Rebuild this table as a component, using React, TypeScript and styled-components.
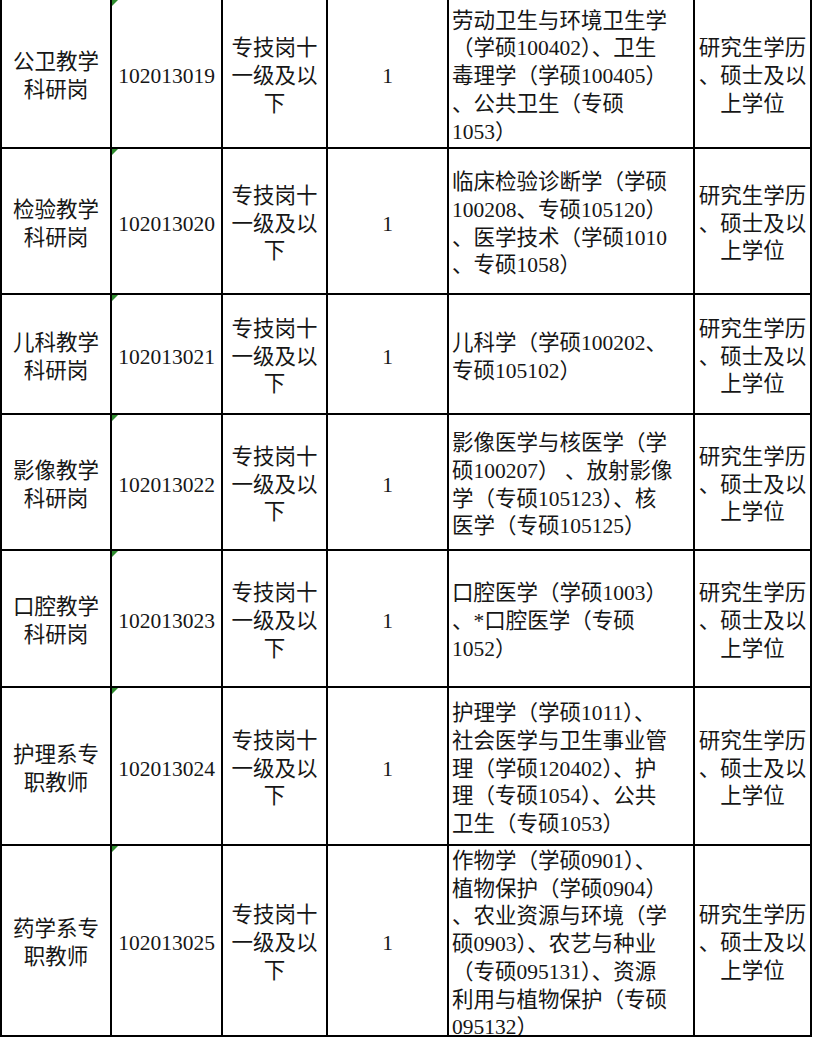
import React from 'react';
import styled, { createGlobalStyle } from 'styled-components';

const GlobalStyle = createGlobalStyle`
  html, body {
    margin: 0;
    padding: 0;
    background: #ffffff;
    overflow: hidden;
  }
`;

const Sheet = styled.div`
  display: grid;
  grid-template-columns: 110px 111px 105px 121px 246px 117px;
  border-left: 2px solid #000;
  width: max-content;
  font-family: "Liberation Serif", "Noto Sans CJK SC", serif;
  font-size: 21.5px;
  line-height: 27.7px;
  color: #161616;
`;

const Cell = styled.div<{ $h: number; $align?: 'left' | 'center'; $top?: boolean }>`
  position: relative;
  height: ${p => p.$h}px;
  box-sizing: border-box;
  border-right: 2px solid #000;
  border-bottom: 2px solid #000;
  display: flex;
  flex-direction: column;
  justify-content: ${p => (p.$top ? 'flex-start' : 'center')};
  align-items: ${p => (p.$align === 'left' ? 'flex-start' : 'center')};
  text-align: ${p => p.$align ?? 'center'};
  padding: ${p => (p.$top ? '2px' : '7px')} ${p => (p.$align === 'left' ? '3px' : '0')} 0;
  overflow: hidden;
`;

// Excel "number stored as text" marker
const CodeCell = styled(Cell)`
  &::before {
    content: '';
    position: absolute;
    top: 0;
    left: 0;
    border-top: 6px solid #2e8b2e;
    border-right: 6px solid transparent;
  }
`;

const Line = styled.span`
  display: block;
  white-space: pre;
`;

interface RowData {
  h: number;
  name: string[];
  code: string;
  major: string[];
  top?: boolean;
}

const level = ['专技岗十', '一级及以', '下'];
const degree = ['研究生学历', '、硕士及以', '上学位'];

const rows: RowData[] = [
  {
    h: 149,
    name: ['公卫教学', '科研岗'],
    code: '102013019',
    major: ['劳动卫生与环境卫生学', '（学硕100402）、卫生', '毒理学（学硕100405）', '、公共卫生（专硕', '1053）'],
  },
  {
    h: 146,
    name: ['检验教学', '科研岗'],
    code: '102013020',
    major: ['临床检验诊断学（学硕', '100208、专硕105120）', '、医学技术（学硕1010', '、专硕1058）'],
  },
  {
    h: 120,
    name: ['儿科教学', '科研岗'],
    code: '102013021',
    major: ['儿科学（学硕100202、', '专硕105102）'],
  },
  {
    h: 136,
    name: ['影像教学', '科研岗'],
    code: '102013022',
    major: ['影像医学与核医学（学', '硕100207） 、放射影像', '学（专硕105123）、核', '医学（专硕105125）'],
  },
  {
    h: 137,
    name: ['口腔教学', '科研岗'],
    code: '102013023',
    major: ['口腔医学（学硕1003）', '、*口腔医学（专硕', '1052）'],
  },
  {
    h: 158,
    name: ['护理系专', '职教师'],
    code: '102013024',
    major: ['护理学（学硕1011）、', '社会医学与卫生事业管', '理（学硕120402）、护', '理（专硕1054）、公共', '卫生（专硕1053）'],
  },
  {
    h: 191,
    name: ['药学系专', '职教师'],
    code: '102013025',
    major: [
      '作物学（学硕0901）、',
      '植物保护（学硕0904）',
      '、农业资源与环境（学',
      '硕0903）、农艺与种业',
      '（专硕095131）、资源',
      '利用与植物保护（专硕',
      '095132）',
    ],
    top: true,
  },
];

const Lines: React.FC<{ items: string[] }> = ({ items }) => (
  <>
    {items.map((t, i) => (
      <Line key={i}>{t}</Line>
    ))}
  </>
);

const App: React.FC = () => (
  <>
    <GlobalStyle />
    <Sheet>
      {rows.map(r => (
        <React.Fragment key={r.code}>
          <Cell $h={r.h}>
            <Lines items={r.name} />
          </Cell>
          <CodeCell $h={r.h}>{r.code}</CodeCell>
          <Cell $h={r.h}>
            <Lines items={level} />
          </Cell>
          <Cell $h={r.h}>1</Cell>
          <Cell $h={r.h} $align="left" $top={r.top}>
            <Lines items={r.major} />
          </Cell>
          <Cell $h={r.h}>
            <Lines items={degree} />
          </Cell>
        </React.Fragment>
      ))}
    </Sheet>
  </>
);

export default App;
